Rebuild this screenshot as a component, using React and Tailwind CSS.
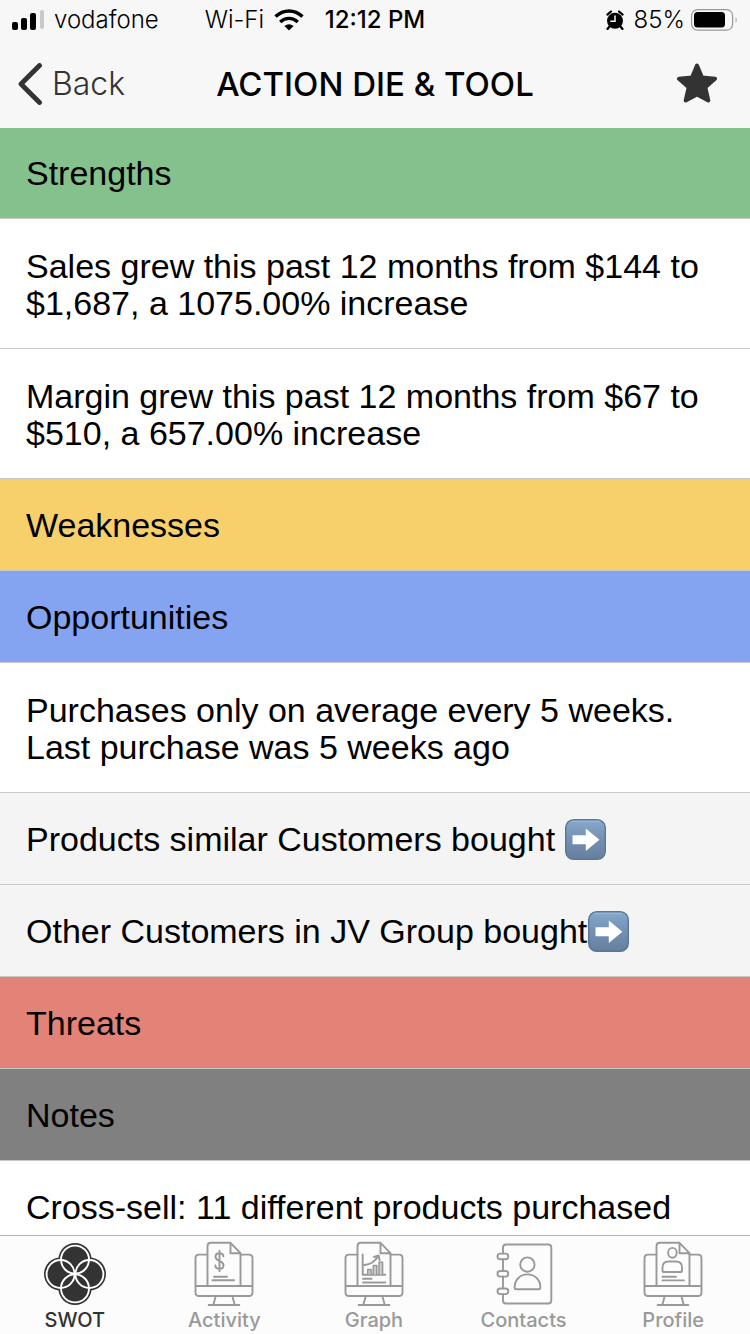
import React from 'react';

const TONES = {
  green: 'bg-[#85c18d]',
  yellow: 'bg-[#f7d06b]',
  blue: 'bg-[#84a4f2]',
  red: 'bg-[#e38276]',
  gray: 'bg-[#808080]',
};

function SectionHeader({ tone, children }) {
  return (
    <h2 className={`flex min-h-[92px] items-center border-b border-[#c8c8c8] px-[26px] pt-[26px] pb-6 ${TONES[tone]}`}>
      {children}
    </h2>
  );
}

function Note({ children }) {
  return (
    <p className="flex min-h-[130px] items-center border-b border-[#c8c8c8] bg-white px-[26px] pt-[26px] pb-6">
      {children}
    </p>
  );
}

function LinkRow({ gap, children }) {
  return (
    <a href="#products" className={`flex min-h-[92px] items-center border-b border-[#c8c8c8] bg-[#f4f4f4] px-[26px] pt-[26px] pb-6 ${gap}`}>
      {children}
      <ArrowBadge />
    </a>
  );
}

function ArrowBadge() {
  return (
    <svg className="-my-1 size-[41px] shrink-0" viewBox="0 0 41 41" aria-hidden="true">
      <defs>
        <linearGradient id="badge" x1="0" y1="0" x2="0" y2="1">
          <stop offset="0" stopColor="#86a9cb" />
          <stop offset="0.5" stopColor="#7390b3" />
          <stop offset="1" stopColor="#667f9f" />
        </linearGradient>
      </defs>
      <rect x="0.7" y="0.7" width="39.6" height="39.6" rx="8" fill="url(#badge)" stroke="#5c7796" strokeWidth="1.4" />
      <path d="M7 2.4h27" stroke="#98b6d3" strokeWidth="1.2" strokeLinecap="round" />
      <path d="M7.500 16.200h13.300V9.600L34.400 20.800 20.800 32v-6.800H7.500z" fill="#fff" />
    </svg>
  );
}

function IconFrame({ children }) {
  return (
    <svg
      className="h-[68px] w-16"
      viewBox="0 0 64 68"
      fill="none"
      stroke="currentColor"
      strokeWidth="1.9"
      strokeLinecap="round"
      strokeLinejoin="round"
      aria-hidden="true"
    >
      {children}
    </svg>
  );
}

function MonitorIcon({ children }) {
  return (
    <IconFrame>
      <path d="M15.5 14.6H7q-3.5 0-3.5 3.5v34.4q0 3.5 3.5 3.5h50q3.5 0 3.5-3.5V18.100q0-3.500-3.500-3.500h-8.500M3.500 46h57" />
      <path d="M15.500 46V6.200q0-3.400 3.400-3.400h19.600l10 10.400V46M38.500 3v10.200h9.800" />
      <path d="M23.600 56.500l-2.200 8.300M40.500 56.500l2.200 8.300M16.700 65h30.600" />
      {children}
    </IconFrame>
  );
}

function SwotIcon() {
  const centers = [[32, 19.600], [17.600, 34], [46.400, 34], [32, 48.400]];
  return (
    <IconFrame>
      {centers.map(([x, y]) => (
        <circle key={`f${x}-${y}`} cx={x} cy={y} r="16.600" fill="currentColor" stroke="none" />
      ))}
      {centers.map(([x, y]) => (
        <circle key={`r${x}-${y}`} cx={x} cy={y} r="14" stroke="#fff" />
      ))}
    </IconFrame>
  );
}

function ActivityIcon() {
  return (
    <MonitorIcon>
      <path d="M27.500 10.800v20.400M31.400 16.400c-.2-2-1.800-3.200-3.900-3.200-2.300 0-4 1.400-4 3.500 0 4.900 8 3.400 8 8.500 0 2.300-1.700 3.700-4 3.700s-4-1.300-4.200-3.500M22 36.700h13M20.500 40.300h21.500" />
    </MonitorIcon>
  );
}

function GraphIcon() {
  return (
    <MonitorIcon>
      <path d="M20.700 14.500v20.200h22.600M22.500 25c6-.5 10.500-3.500 13.800-9M32 17l4.600-1.600 1 4.800" />
      <path d="M25.700 34.500v-5h3.500v5M31.300 34.500v-9h3.500v9M37 34.500V22.300h3.600v12.200" strokeWidth="1.5" fill="#ccc" />
      <path d="M21 38.700h8.500M21 42.500h22.300" />
    </MonitorIcon>
  );
}

function ContactsIcon() {
  return (
    <IconFrame>
      <path d="M11 13.500V7.500q0-3 3-3h42.300q3 0 3 3v53q0 3-3 3H14q-3 0-3-3v-6.300M11 19.200v11.700M11 36.500v12" />
      <rect x="5.500" y="13.600" width="10.800" height="5.600" rx="2.800" />
      <rect x="5.500" y="31" width="10.800" height="5.600" rx="2.800" />
      <rect x="5.500" y="48.500" width="10.800" height="5.600" rx="2.800" />
      <circle cx="35.400" cy="24.600" r="7.200" />
      <path d="M22.700 48v-1c0-7.300 5.500-12.600 12.800-12.600S48.300 39.700 48.300 47v1q0 1.300-1.300 1.300H24q-1.300 0-1.300-1.300z" />
    </IconFrame>
  );
}

function ProfileIcon() {
  return (
    <MonitorIcon>
      <ellipse cx="31.400" cy="12.800" rx="4.300" ry="4.900" />
      <path d="M21.500 31v-3.500q0-6 6-6h7.500q6 0 6 6V31q0 1-1 1H22.500q-1 0-1-1zM21.500 36.700h13.500M21.500 40.400h21.500" />
    </MonitorIcon>
  );
}

function StatusBar() {
  return (
    <div className="flex h-10 items-center px-3 text-[24px] leading-7 font-light text-black">
      <div className="flex flex-1 items-center">
        <svg className="h-5 w-8" viewBox="0 0 32 20" aria-hidden="true">
          <rect x="0" y="12" width="6" height="8" rx="2" />
          <rect x="9" y="8" width="6" height="12" rx="2" />
          <rect x="18" y="3" width="6" height="17" rx="2" />
          <rect x="28" y="0" width="4" height="19" rx="2" fill="#c9c9c9" />
        </svg>
        <span className="ml-[10px]">vodafone</span>
        <span className="ml-[46px]">Wi-Fi</span>
        <svg className="ml-[10px] h-[22px] w-[30px]" viewBox="0 0 30 22" fill="none" stroke="#000" strokeWidth="3.400" aria-hidden="true">
          <path d="M1.500 7.600Q7.500 2 15 2t13.500 5.600M6.200 13q4-3.600 8.800-3.600t8.800 3.600" />
          <path d="M10.400 17Q15 13.500 19.600 17L15 21.600z" fill="#000" stroke="none" />
        </svg>
      </div>
      <time className="font-medium">12:12 PM</time>
      <div className="flex flex-1 items-center justify-end">
        <svg className="mr-[10px] h-5 w-[18px]" viewBox="0 0 18 20" aria-hidden="true">
          <circle cx="9" cy="10.800" r="8" />
          <path d="M3.500 16.500 1.500 19M14.500 16.500l2 2.500M1.400 4.600 5 1.500M16.600 4.600 13 1.500" stroke="#000" strokeWidth="2.200" strokeLinecap="round" />
          <path d="M9 5.500v5.800H4.300" fill="none" stroke="#f7f7f7" strokeWidth="1.500" />
        </svg>
        <span>85%</span>
        <svg className="ml-[6px] h-[22px] w-[47px]" viewBox="0 0 47 22" aria-hidden="true">
          <rect x="0.600" y="0.600" width="41" height="20.600" rx="6" fill="none" stroke="#999" strokeWidth="1.200" />
          <rect x="3" y="3" width="31" height="15.500" rx="3.500" />
          <path d="M44.500 8v6q1.500-1 1.500-3t-1.500-3z" fill="#bbb" />
        </svg>
      </div>
    </div>
  );
}

function TitleBar() {
  return (
    <div className="flex h-[88px] items-center px-[18px]">
      <div className="flex flex-1">
        <button type="button" className="flex items-center gap-[10px] text-[32px] leading-10 font-light text-[#333]">
          <svg className="h-[42px] w-6" viewBox="0 0 24 42" fill="none" stroke="currentColor" strokeWidth="4.800" strokeLinecap="round" strokeLinejoin="round" aria-hidden="true">
            <path d="M21.500 2.500 3 21l18.500 18.500" />
          </svg>
          Back
        </button>
      </div>
      <h1 className="text-[33px] leading-10 font-medium text-black">ACTION DIE &amp; TOOL</h1>
      <div className="flex flex-1 justify-end">
        <button type="button" aria-label="Favorite" className="mr-[14px] text-[#333]">
          <svg className="size-[42px]" viewBox="0 0 42 42" fill="currentColor" stroke="currentColor" strokeWidth="4" strokeLinejoin="round" aria-hidden="true">
            <path d="M21 2.500l5 12L39 15.800l-9.700 8.500 3 13.200L21 31.500 9.700 37.500l3-13.200L3 15.800l13-1.300z" />
          </svg>
        </button>
      </div>
    </div>
  );
}

const TABS = [
  { label: 'SWOT', Icon: SwotIcon, active: true },
  { label: 'Activity', Icon: ActivityIcon },
  { label: 'Graph', Icon: GraphIcon },
  { label: 'Contacts', Icon: ContactsIcon },
  { label: 'Profile', Icon: ProfileIcon },
];

export default function App() {
  return (
    <div className="flex h-screen flex-col bg-white font-['Inter',sans-serif]">
      <header className="relative z-10 shrink-0 bg-[#f7f7f7]">
        <StatusBar />
        <TitleBar />
      </header>
      <main className="-mt-px min-h-0 flex-1 overflow-hidden font-['Liberation_Sans',Arial,sans-serif] text-[34px] leading-[37px] text-black">
        <SectionHeader tone="green">Strengths</SectionHeader>
        <Note>Sales grew this past 12 months from $144 to $1,687, a 1075.00% increase</Note>
        <Note>Margin grew this past 12 months from $67 to $510, a 657.00% increase</Note>
        <SectionHeader tone="yellow">Weaknesses</SectionHeader>
        <SectionHeader tone="blue">Opportunities</SectionHeader>
        <Note>Purchases only on average every 5 weeks. Last purchase was 5 weeks ago</Note>
        <LinkRow gap="gap-[10px]">Products similar Customers bought</LinkRow>
        <LinkRow gap="gap-px">Other Customers in JV Group bought</LinkRow>
        <SectionHeader tone="red">Threats</SectionHeader>
        <SectionHeader tone="gray">Notes</SectionHeader>
        <p className="bg-white px-[26px] pt-7 pb-6">Cross-sell: 11 different products purchased</p>
      </main>
      <nav className="flex h-[99px] shrink-0 border-t border-[#b2b2b2] bg-[#fcfcfc] pr-[2px]">
        {TABS.map(({ label, Icon, active }) => (
          <a
            key={label}
            href={`#${label.toLowerCase()}`}
            aria-current={active ? 'page' : undefined}
            className={`flex flex-1 flex-col items-center pt-1 text-[20px] leading-6 font-medium ${active ? 'text-[#333]' : 'text-[#999]'}`}
          >
            <Icon />
            {label}
          </a>
        ))}
      </nav>
    </div>
  );
}
